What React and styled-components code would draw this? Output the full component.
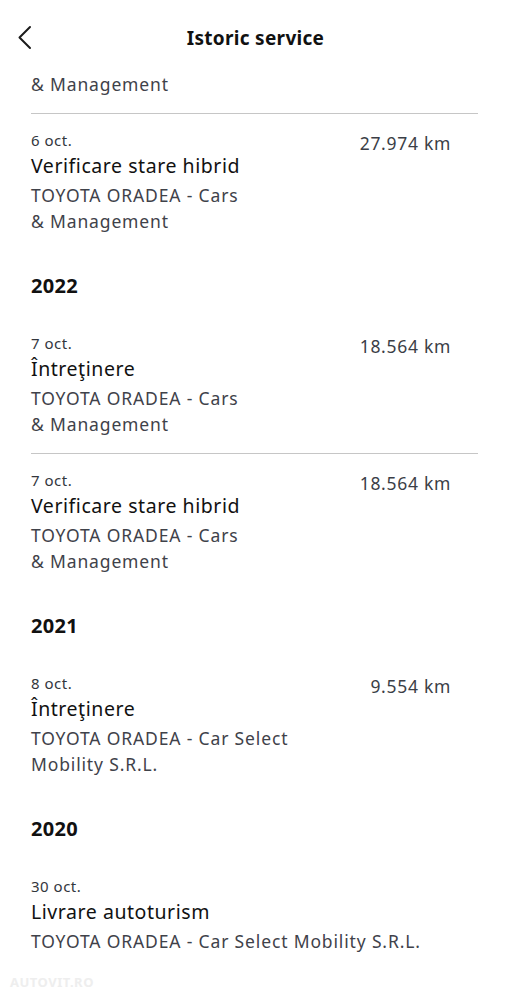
import styled, { createGlobalStyle } from "styled-components";

const GlobalStyle = createGlobalStyle`
  html, body {
    margin: 0;
    padding: 0;
    background: #ffffff;
  }
  body {
    font-family: "Noto Sans", Lato, "Liberation Sans", sans-serif;
    -webkit-font-smoothing: antialiased;
  }
`;

const groups = [
  {
    year: "2022",
    items: [
      {
        date: "7 oct.",
        title: "Întreţinere",
        km: "18.564 km",
        lines: ["TOYOTA ORADEA - Cars", "& Management"],
      },
      {
        date: "7 oct.",
        title: "Verificare stare hibrid",
        km: "18.564 km",
        lines: ["TOYOTA ORADEA - Cars", "& Management"],
      },
    ],
  },
  {
    year: "2021",
    items: [
      {
        date: "8 oct.",
        title: "Întreţinere",
        km: "9.554 km",
        lines: ["TOYOTA ORADEA - Car Select", "Mobility S.R.L."],
      },
    ],
  },
  {
    year: "2020",
    items: [
      {
        date: "30 oct.",
        title: "Livrare autoturism",
        km: null,
        lines: ["TOYOTA ORADEA - Car Select Mobility S.R.L."],
      },
    ],
  },
];

function BackIcon() {
  return (
    <svg width="16" height="26" viewBox="0 0 16 26" fill="none">
      <path
        d="M13 2 L2.5 12.5 L13 23"
        stroke="#1c1c1c"
        strokeWidth="2"
        strokeLinecap="round"
        strokeLinejoin="round"
      />
    </svg>
  );
}

function ServiceItem({ item }) {
  return (
    <Item>
      <ItemTop>
        <ItemDate>{item.date}</ItemDate>
        {item.km && <ItemKm>{item.km}</ItemKm>}
      </ItemTop>
      <ItemTitle>{item.title}</ItemTitle>
      {item.lines.map((line) => (
        <ItemSub key={line}>{line}</ItemSub>
      ))}
    </Item>
  );
}

function App() {
  return (
    <Screen>
      <GlobalStyle />
      <Header>
        <BackButton>
          <BackIcon />
        </BackButton>
        <HeaderTitle>Istoric service</HeaderTitle>
      </Header>
      <Content>
        <ItemSub>& Management</ItemSub>
        <Divider />
        <ServiceItem
          item={{
            date: "6 oct.",
            title: "Verificare stare hibrid",
            km: "27.974 km",
            lines: ["TOYOTA ORADEA - Cars", "& Management"],
          }}
        />
        {groups.map((group) => (
          <YearGroup key={group.year}>
            <YearTitle>{group.year}</YearTitle>
            {group.items.map((item, i) => (
              <div key={i}>
                {i > 0 && <Divider />}
                <ServiceItem item={item} />
              </div>
            ))}
          </YearGroup>
        ))}
      </Content>
      <Watermark>AUTOVIT.RO</Watermark>
    </Screen>
  );
}

const Screen = styled.div`
  position: relative;
  width: 509px;
  height: 999px;
  overflow: hidden;
  background: #ffffff;
`;

const Header = styled.header`
  position: relative;
  height: 66px;
  padding-top: 5px;
  display: flex;
  align-items: center;
  justify-content: center;
`;

const BackButton = styled.div`
  position: absolute;
  left: 17px;
  top: 25px;
  display: flex;
`;

const HeaderTitle = styled.h1`
  margin: 0 0 0 2px;
  font-size: 19px;
  font-weight: 700;
  letter-spacing: 0.3px;
  color: #111111;
  line-height: 28px;
`;

const Content = styled.main`
  padding: 0 31px;
`;

const Divider = styled.hr`
  margin: 16px 0;
  border: 0;
  height: 1px;
  background: #c6c6c6;
`;

const Item = styled.div`
  display: flex;
  flex-direction: column;
`;

const ItemTop = styled.div`
  display: flex;
  justify-content: space-between;
  align-items: flex-start;
  padding-right: 27px;
  height: 20px;
`;

const ItemDate = styled.span`
  font-size: 15px;
  line-height: 20px;
  letter-spacing: 0.5px;
  color: #33363d;
`;

const ItemKm = styled.span`
  font-size: 17.5px;
  line-height: 26px;
  letter-spacing: 0.7px;
  color: #3b3e46;
`;

const ItemTitle = styled.div`
  font-size: 19.5px;
  line-height: 32px;
  letter-spacing: 0.55px;
  color: #111111;
`;

const ItemSub = styled.div`
  font-size: 17.5px;
  line-height: 26px;
  letter-spacing: 0.85px;
  color: #3f424a;
`;

const YearGroup = styled.section`
  margin-top: 38px;
`;

const YearTitle = styled.h2`
  margin: 0 0 33px;
  font-size: 20px;
  line-height: 28px;
  font-weight: 700;
  letter-spacing: 0.3px;
  color: #111111;
`;

const Watermark = styled.div`
  position: absolute;
  left: 10px;
  bottom: 8px;
  font-size: 13px;
  font-weight: 700;
  letter-spacing: 0.5px;
  color: #eeeeee;
`;

export default App;
